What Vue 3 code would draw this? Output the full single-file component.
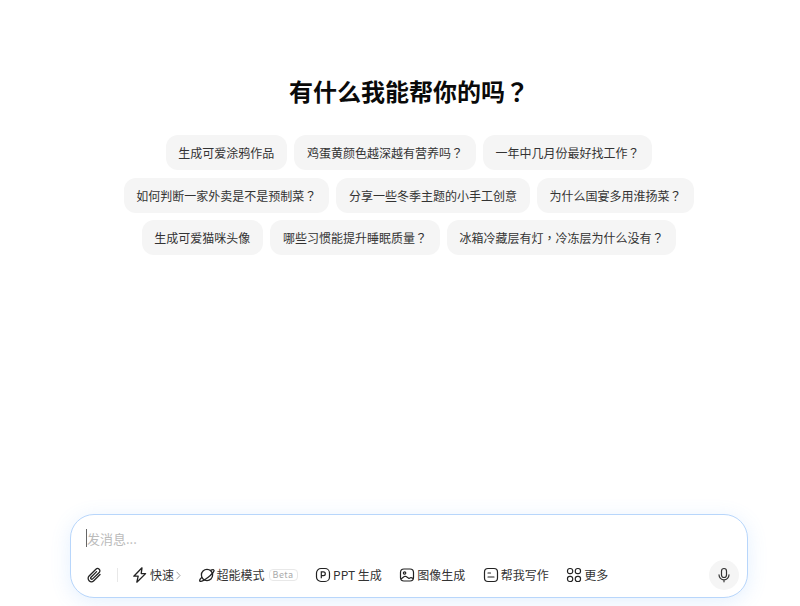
<script setup>
const rows = [
  ['生成可爱涂鸦作品', '鸡蛋黄颜色越深越有营养吗？', '一年中几月份最好找工作？'],
  ['如何判断一家外卖是不是预制菜？', '分享一些冬季主题的小手工创意', '为什么国宴多用淮扬菜？'],
  ['生成可爱猫咪头像', '哪些习惯能提升睡眠质量？', '冰箱冷藏层有灯，冷冻层为什么没有？']
]

// 标点要居中显示，SC 字体里是靠左下的
const split = (text) => text.split(/([？，])/).filter(Boolean)
const isPunct = (part) => part === '？' || part === '，'
</script>

<template>
  <div class="page">
    <div class="top">
      <h1 class="title">有什么我能帮你的吗<span class="punct">？</span></h1>
      <div class="chips">
        <div v-for="(row, i) in rows" :key="i" class="chip-row">
          <div v-for="text in row" :key="text" class="chip">
            <span v-for="(part, j) in split(text)" :key="j" :class="{ punct: isPunct(part) }">{{ part }}</span>
          </div>
        </div>
      </div>
    </div>

    <div class="composer">
      <div class="input-line">
        <span class="caret"></span>
        <span class="placeholder">发消息...</span>
      </div>
      <div class="toolbar">
        <div class="tools">
          <button class="tool attach">
            <svg width="16" height="16" viewBox="0 0 16 16" fill="none" stroke="#222" stroke-width="1.300" stroke-linecap="round" stroke-linejoin="round">
              <path d="M14 7.500 7.800 13.700a3.300 3.300 0 0 1-4.700-4.700l6.800-6.800a2.300 2.300 0 0 1 3.300 3.300L6.600 11.900a1.100 1.100 0 0 1-1.600-1.600L10.600 4.600"/>
            </svg>
          </button>
          <span class="divider"></span>
          <button class="tool speed">
            <svg width="16" height="16" viewBox="0 0 16 16" fill="none" stroke="#222" stroke-width="1.300" stroke-linejoin="round">
              <path d="M10 .8 1.800 9.200h4.400L4.800 15.200l8.800-8.600H9.200L10 .8Z"/>
            </svg>
            <span>快速</span>
            <svg class="chev" width="5" height="9" viewBox="0 0 5 9" fill="none" stroke="#999" stroke-width="0.900">
              <path d="m.6.8 3.400 3.700L.6 8.200"/>
            </svg>
          </button>
          <button class="tool">
            <svg width="16" height="16" viewBox="0 0 16 16" fill="none" stroke="#222" stroke-width="1.300">
              <circle cx="8" cy="8" r="5.600"/>
              <path d="M3.200 10C1.200 11.800.3 13.200.8 14c.8 1 4.800-1 8.400-3.800s6.400-6.200 5.700-7.200c-.4-.7-1.900-.4-3.800.6"/>
            </svg>
            <span>超能模式</span>
            <span class="beta">Beta</span>
          </button>
          <button class="tool">
            <svg width="16" height="16" viewBox="0 0 16 16" fill="none" stroke="#222" stroke-width="1.200">
              <rect x="1.500" y="1.500" width="13" height="13" rx="4.500"/>
              <path d="M6.300 11.300V4.900h2.100a1.900 1.900 0 0 1 0 3.800H6.300"/>
            </svg>
            <span>PPT 生成</span>
          </button>
          <button class="tool">
            <svg width="16" height="16" viewBox="0 0 16 16" fill="none" stroke="#222" stroke-width="1.200" stroke-linejoin="round">
              <rect x="1.500" y="2" width="13" height="12" rx="3.500"/>
              <circle cx="5.600" cy="6" r="1.200"/>
              <path d="m2 12 3.300-2.400c.6-.4 1.200-.4 1.800 0L10 11.500l1-.6c.8-.5 1.500-.5 3.400.9"/>
            </svg>
            <span>图像生成</span>
          </button>
          <button class="tool">
            <svg width="16" height="16" viewBox="0 0 16 16" fill="none" stroke="#222" stroke-width="1.200" stroke-linecap="round">
              <rect x="1.500" y="1.500" width="13" height="13" rx="3.500"/>
              <path d="M5 6h2.500M5 10h6"/>
            </svg>
            <span>帮我写作</span>
          </button>
          <button class="tool">
            <svg width="16" height="16" viewBox="0 0 16 16" fill="none" stroke="#222" stroke-width="1.200">
              <rect x="1.500" y="1.500" width="5.200" height="5.200" rx="2.200"/>
              <rect x="9.300" y="1.500" width="5.200" height="5.200" rx="2.200"/>
              <rect x="1.500" y="9.300" width="5.200" height="5.200" rx="2.200"/>
              <rect x="9.300" y="9.300" width="5.200" height="5.200" rx="2.200"/>
            </svg>
            <span>更多</span>
          </button>
        </div>
        <button class="mic">
          <svg width="16" height="16" viewBox="0 0 16 16" fill="none" stroke="#333" stroke-width="1.200" stroke-linecap="round">
            <rect x="5.500" y="1.500" width="5" height="9" rx="2.500"/>
            <path d="M3 7.800a5 5 0 0 0 10 0M8 13v1.800"/>
          </svg>
        </button>
      </div>
    </div>
  </div>
</template>

<style>
html, body { margin: 0; background: #fff; }
</style>

<style scoped>
.page {
  height: 606px;
  box-sizing: border-box;
  padding: 0 52px 8px 70px;
  display: flex;
  flex-direction: column;
  justify-content: space-between;
  overflow: hidden;
  font-family: "Noto Sans CJK SC", sans-serif;
  color: #222;
}
.punct { font-family: "Noto Sans CJK TC", sans-serif; }

/* 上半部分 */
.top { padding-top: 75px; }
.title {
  margin: 0;
  font-size: 24px;
  line-height: 32px;
  font-weight: 700;
  color: #0a0a0a;
  text-align: center;
}
.chips {
  margin-top: 28px;
  display: flex;
  flex-direction: column;
  gap: 7.500px;
}
.chip-row {
  display: flex;
  justify-content: center;
  gap: 7px;
  margin: 0 -40px;
}
.chip {
  height: 35px;
  padding: 0 12.800px;
  display: flex;
  align-items: center;
  background: #f5f5f5;
  border-radius: 12px;
  font-size: 12px;
  color: #333;
  white-space: nowrap;
}

/* 输入框 */
.composer {
  height: 84px;
  box-sizing: border-box;
  border: 1px solid #b8d6fb;
  border-radius: 24px;
  background: #fff;
  box-shadow: 0 4px 20px rgba(90, 160, 250, 0.16);
  padding: 13px 8px 7px 15px;
  display: flex;
  flex-direction: column;
  justify-content: space-between;
}
.input-line {
  display: flex;
  align-items: center;
  height: 20px;
}
.caret {
  width: 1px;
  height: 18px;
  background: #666;
}
.placeholder {
  font-size: 13px;
  color: #bbb;
}
.toolbar {
  display: flex;
  align-items: center;
  justify-content: space-between;
}
.tools {
  display: flex;
  align-items: center;
}
.tool {
  display: flex;
  align-items: center;
  gap: 2px;
  padding: 0;
  margin-right: 17.500px;
  border: 0;
  background: none;
  font: inherit;
  font-size: 12px;
  line-height: 16px;
  color: #333;
  white-space: nowrap;
}
.attach { margin-right: 15px; }
.divider {
  width: 1px;
  height: 14px;
  background: #e8e8e8;
  margin-right: 14px;
}
.beta {
  margin-left: 2px;
  font-size: 9px;
  line-height: 10px;
  padding: 0 3px;
  color: #aaa;
  border: 1px solid #e8e8e8;
  border-radius: 4px;
  letter-spacing: 0.500px;
}
.mic {
  width: 30px;
  height: 30px;
  padding: 0;
  border: 0;
  border-radius: 50%;
  background: #f5f5f5;
  display: flex;
  align-items: center;
  justify-content: center;
}
</style>
